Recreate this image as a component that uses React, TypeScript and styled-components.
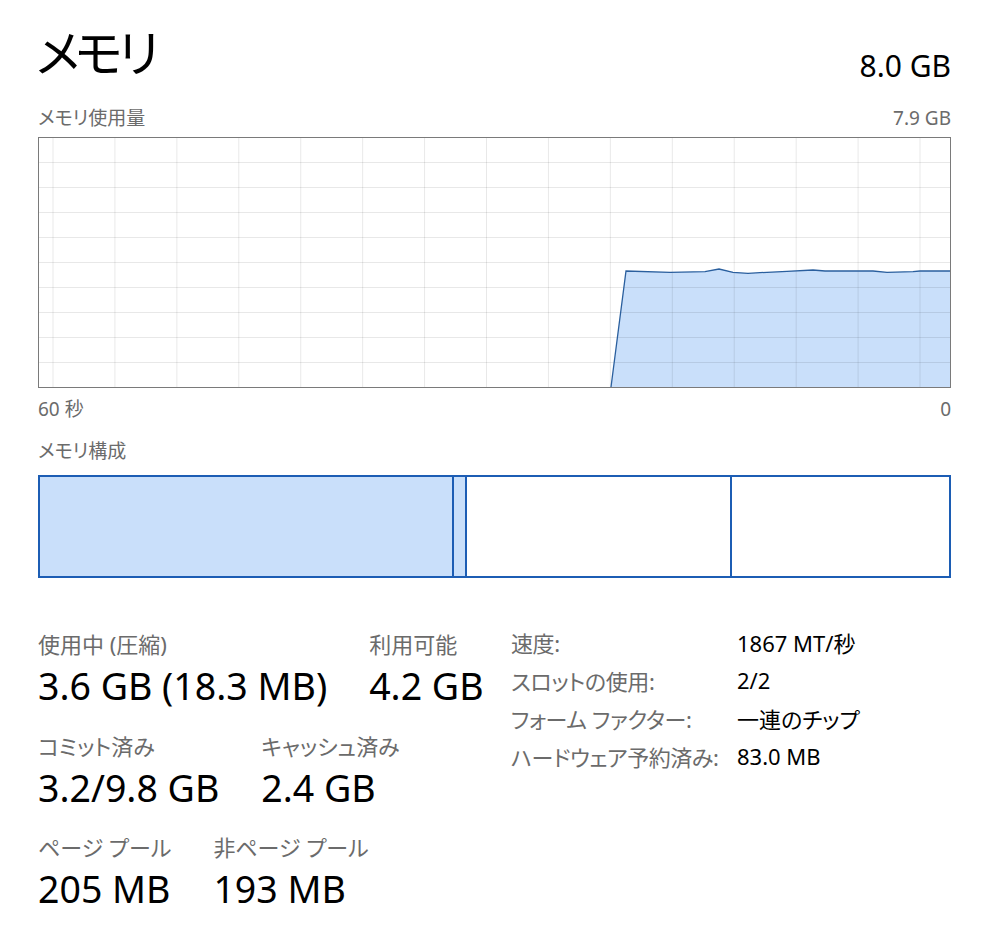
import React from "react";
import styled, { createGlobalStyle } from "styled-components";

const Global = createGlobalStyle`
  html, body { margin: 0; padding: 0; background: #fff; }
  body {
    font-family: "Noto Sans", "Noto Sans CJK JP", sans-serif;
    font-feature-settings: "palt";
    color: #000;
  }
`;

const Page = styled.div`
  width: 992px;
  box-sizing: border-box;
  padding: 22px 41px 0 38px;
  display: flex;
  flex-direction: column;
`;

const Header = styled.div`
  display: flex;
  justify-content: space-between;
  align-items: flex-end;
  height: 78px;
`;

const Title = styled.div`
  font-size: 50px;
  line-height: 56px;
  margin-left: -2px;
  margin-bottom: 19px;
  letter-spacing: -4.5px;
`;

const Total = styled.div`
  font-size: 30px;
  line-height: 36px;
  margin-bottom: 16px;
`;

const Caption = styled.div<{ $mt: number }>`
  display: flex;
  justify-content: space-between;
  font-size: 19px;
  line-height: 24px;
  color: #6b6b6b;
  margin-top: ${(p) => p.$mt}px;
`;

const ChartBox = styled.div`
  margin-top: 7px;
  height: 249px;
  border: 1px solid #7a7a7a;
  display: flex;
`;

const ChartSvg = styled.svg`
  display: block;
  width: 911px;
  height: 249px;
`;

const CompBar = styled.div`
  margin-top: 12px;
  height: 99px;
  border: 2px solid #1c5db4;
  display: flex;
`;

const Segment = styled.div<{ $w?: number; $fill: boolean; $last?: boolean }>`
  ${(p) => (p.$w ? `flex: 0 0 ${p.$w}px;` : "flex: 1 1 auto;")}
  box-sizing: border-box;
  background: ${(p) => (p.$fill ? "#c9dffa" : "#fff")};
  border-right: ${(p) => (p.$last ? "none" : "2px solid #1c5db4")};
`;

const Stats = styled.div`
  display: grid;
  grid-template-columns: 473px 1fr;
  margin-top: 45px;
`;

const LeftCol = styled.div`
  display: flex;
  flex-direction: column;
  gap: 23.5px;
  padding-top: 7px;
`;

const StatRow = styled.div`
  display: flex;
  gap: 42px;
`;

const Stat = styled.div`
  display: flex;
  flex-direction: column;
  gap: 6px;
`;

const StatLabel = styled.div`
  font-size: 22px;
  line-height: 28px;
  color: #6b6b6b;
  white-space: nowrap;
`;

const StatValue = styled.div`
  font-size: 37.5px;
  line-height: 44px;
  white-space: nowrap;
`;

const InfoGrid = styled.div`
  display: grid;
  grid-template-columns: 226px 1fr;
  grid-auto-rows: 38px;
  align-items: center;
  font-size: 22px;
`;

const InfoLabel = styled.div`
  color: #6b6b6b;
  white-space: nowrap;
  letter-spacing: -0.4px;
`;

const InfoValue = styled.div`
  color: #000;
  white-space: nowrap;
`;

const linePts: [number, number][] = [
  [611, 387],
  [626, 271],
  [670, 272.3],
  [705, 271.7],
  [719, 269],
  [733, 272.3],
  [748, 273.3],
  [767, 272.3],
  [787, 271.3],
  [813, 270],
  [825, 271],
  [873, 271],
  [887, 272.3],
  [913, 271.7],
  [920, 271],
  [951, 271],
];

function Chart() {
  const line = linePts.map((p) => p.join(",")).join(" ");
  const area = line + " 951,388 611,388";
  const vLines = Array.from({ length: 15 }, (_, k) => 53 + 61.93 * k);
  const hLines = Array.from({ length: 9 }, (_, k) => 162.5 + 25 * k);
  return (
    <ChartSvg viewBox="39 138 911 249" preserveAspectRatio="none">
      <polygon points={area} fill="#c9dffa" />
      {vLines.map((x) => (
        <line key={"v" + x} x1={x} x2={x} y1={138} y2={387} stroke="rgba(0,0,0,0.09)" strokeWidth={1} />
      ))}
      {hLines.map((y) => (
        <line key={"h" + y} x1={39} x2={950} y1={y} y2={y} stroke="rgba(0,0,0,0.09)" strokeWidth={1} />
      ))}
      <polyline points={line} fill="none" stroke="#2a5f9e" strokeWidth={1.3} />
    </ChartSvg>
  );
}

export default function App() {
  return (
    <>
      <Global />
      <Page>
        <Header>
          <Title>メモリ</Title>
          <Total>8.0 GB</Total>
        </Header>
        <Caption $mt={6}>
          <span>メモリ使用量</span>
          <span>7.9 GB</span>
        </Caption>
        <ChartBox>
          <Chart />
        </ChartBox>
        <Caption $mt={9}>
          <span>60 秒</span>
          <span>0</span>
        </Caption>
        <Caption $mt={18}>
          <span>メモリ構成</span>
        </Caption>
        <CompBar>
          <Segment $w={414} $fill />
          <Segment $w={13} $fill />
          <Segment $w={265} $fill={false} />
          <Segment $fill={false} $last />
        </CompBar>
        <Stats>
          <LeftCol>
            <StatRow>
              <Stat>
                <StatLabel>使用中 (圧縮)</StatLabel>
                <StatValue>3.6 GB (18.3 MB)</StatValue>
              </Stat>
              <Stat>
                <StatLabel>利用可能</StatLabel>
                <StatValue>4.2 GB</StatValue>
              </Stat>
            </StatRow>
            <StatRow>
              <Stat>
                <StatLabel>コミット済み</StatLabel>
                <StatValue>3.2/9.8 GB</StatValue>
              </Stat>
              <Stat>
                <StatLabel>キャッシュ済み</StatLabel>
                <StatValue>2.4 GB</StatValue>
              </Stat>
            </StatRow>
            <StatRow>
              <Stat>
                <StatLabel>ページ プール</StatLabel>
                <StatValue>205 MB</StatValue>
              </Stat>
              <Stat>
                <StatLabel>非ページ プール</StatLabel>
                <StatValue>193 MB</StatValue>
              </Stat>
            </StatRow>
          </LeftCol>
          <InfoGrid>
            <InfoLabel>速度:</InfoLabel>
            <InfoValue>1867 MT/秒</InfoValue>
            <InfoLabel>スロットの使用:</InfoLabel>
            <InfoValue>2/2</InfoValue>
            <InfoLabel>フォーム ファクター:</InfoLabel>
            <InfoValue>一連のチップ</InfoValue>
            <InfoLabel>ハードウェア予約済み:</InfoLabel>
            <InfoValue>83.0 MB</InfoValue>
          </InfoGrid>
        </Stats>
      </Page>
    </>
  );
}
